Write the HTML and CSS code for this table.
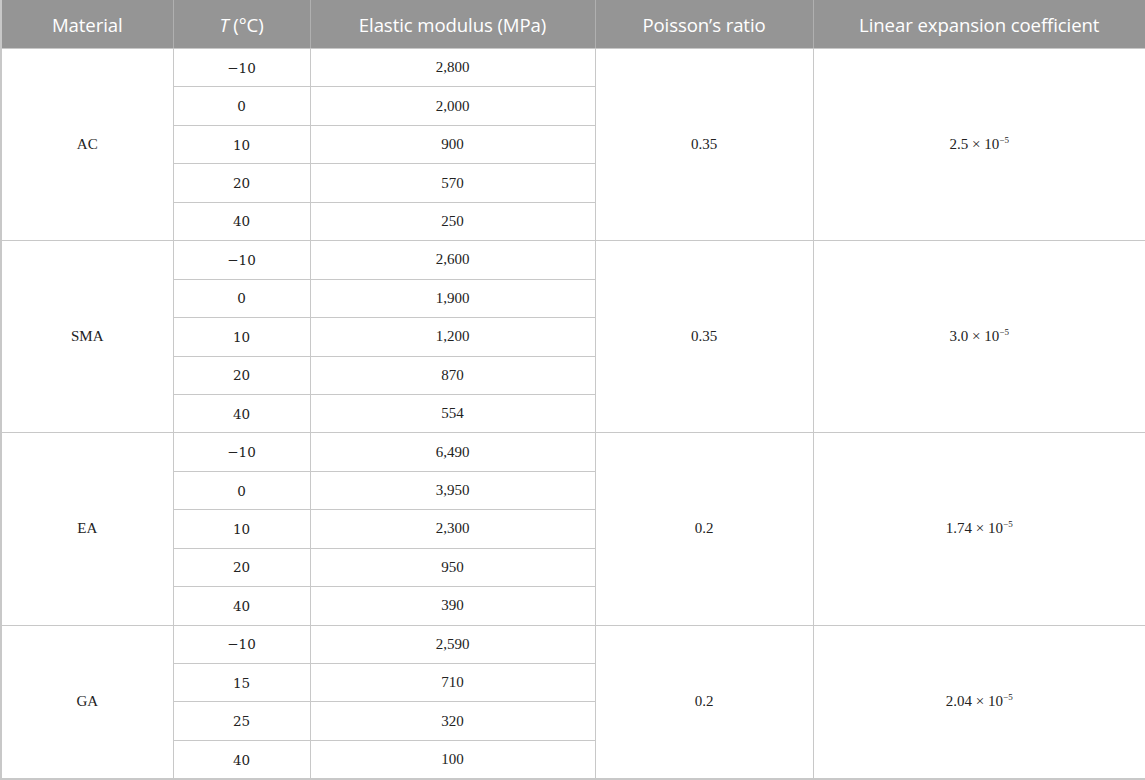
FILE: index.html
```html
<!DOCTYPE html>
<html lang="en">
<head>
<meta charset="utf-8">
<link rel="stylesheet" href="styles.css">
</head>
<body>
<table class="data">
  <colgroup>
    <col class="c1"><col class="c2"><col class="c3"><col class="c4"><col class="c5">
  </colgroup>
  <thead>
    <tr>
      <th>Material</th>
      <th><i>T</i> (°C)</th>
      <th>Elastic modulus (MPa)</th>
      <th>Poisson’s ratio</th>
      <th>Linear expansion coefficient</th>
    </tr>
  </thead>
  <tbody>
    <tr><td rowspan="5">AC</td><td class="t">−10</td><td>2,800</td><td rowspan="5">0.35</td><td rowspan="5">2.5 × 10<sup>−5</sup></td></tr>
    <tr><td class="t">0</td><td>2,000</td></tr>
    <tr><td class="t">10</td><td>900</td></tr>
    <tr><td class="t">20</td><td>570</td></tr>
    <tr><td class="t">40</td><td>250</td></tr>
    <tr><td rowspan="5">SMA</td><td class="t">−10</td><td>2,600</td><td rowspan="5">0.35</td><td rowspan="5">3.0 × 10<sup>−5</sup></td></tr>
    <tr><td class="t">0</td><td>1,900</td></tr>
    <tr><td class="t">10</td><td>1,200</td></tr>
    <tr><td class="t">20</td><td>870</td></tr>
    <tr><td class="t">40</td><td>554</td></tr>
    <tr><td rowspan="5">EA</td><td class="t">−10</td><td>6,490</td><td rowspan="5">0.2</td><td rowspan="5">1.74 × 10<sup>−5</sup></td></tr>
    <tr><td class="t">0</td><td>3,950</td></tr>
    <tr><td class="t">10</td><td>2,300</td></tr>
    <tr><td class="t">20</td><td>950</td></tr>
    <tr><td class="t">40</td><td>390</td></tr>
    <tr><td rowspan="4">GA</td><td class="t">−10</td><td>2,590</td><td rowspan="4">0.2</td><td rowspan="4">2.04 × 10<sup>−5</sup></td></tr>
    <tr><td class="t">15</td><td>710</td></tr>
    <tr><td class="t">25</td><td>320</td></tr>
    <tr><td class="t">40</td><td>100</td></tr>
  </tbody>
</table>
</body>
</html>
```
FILE: styles.css
```css
html, body {
  margin: 0;
  padding: 0;
  background: #ffffff;
}

.data {
  width: 1145px;
  border-collapse: collapse;
  table-layout: fixed;
  font-family: "Liberation Serif", "Times New Roman", serif;
  font-size: 15px;
  color: #222222;
}

.c1 { width: 172px; }
.c2 { width: 137px; }
.c3 { width: 285px; }
.c4 { width: 218px; }
.c5 { width: 333px; }

.data thead th {
  background: #959595;
  color: #ffffff;
  font-family: "Open Sans", "Noto Sans", sans-serif;
  font-weight: 400;
  font-size: 18.6px;
  line-height: 24px;
  letter-spacing: -0.1px;
  height: 47px;
  padding: 0;
  text-align: center;
  border-left: 1px solid #b0b0b0;
  border-right: 1px solid #b0b0b0;
  border-top: 1px solid #959595;
  border-bottom: 1px solid #c8c8c8;
}

.data thead th:first-child { border-left: 2px solid #c8c8c8; }
.data thead th:last-child { border-right: 2px solid #c8c8c8; }

.data tbody td {
  height: 37.45px;
  padding: 0;
  text-align: center;
  border: 1px solid #c8c8c8;
}

.data tbody td.t {
  font-family: "DejaVu Serif", "Liberation Serif", serif;
  font-size: 13.5px;
}

.data tbody tr:last-child td,
.data tbody td[rowspan="4"] {
  border-bottom: 2px solid #c8c8c8;
}

.data tbody td:first-child[rowspan] { border-left: 2px solid #c8c8c8; }
.data tbody td:last-child[rowspan] { border-right: 2px solid #c8c8c8; }

.data sup {
  font-size: 9px;
  vertical-align: 6px;
  line-height: 0;
}
```
